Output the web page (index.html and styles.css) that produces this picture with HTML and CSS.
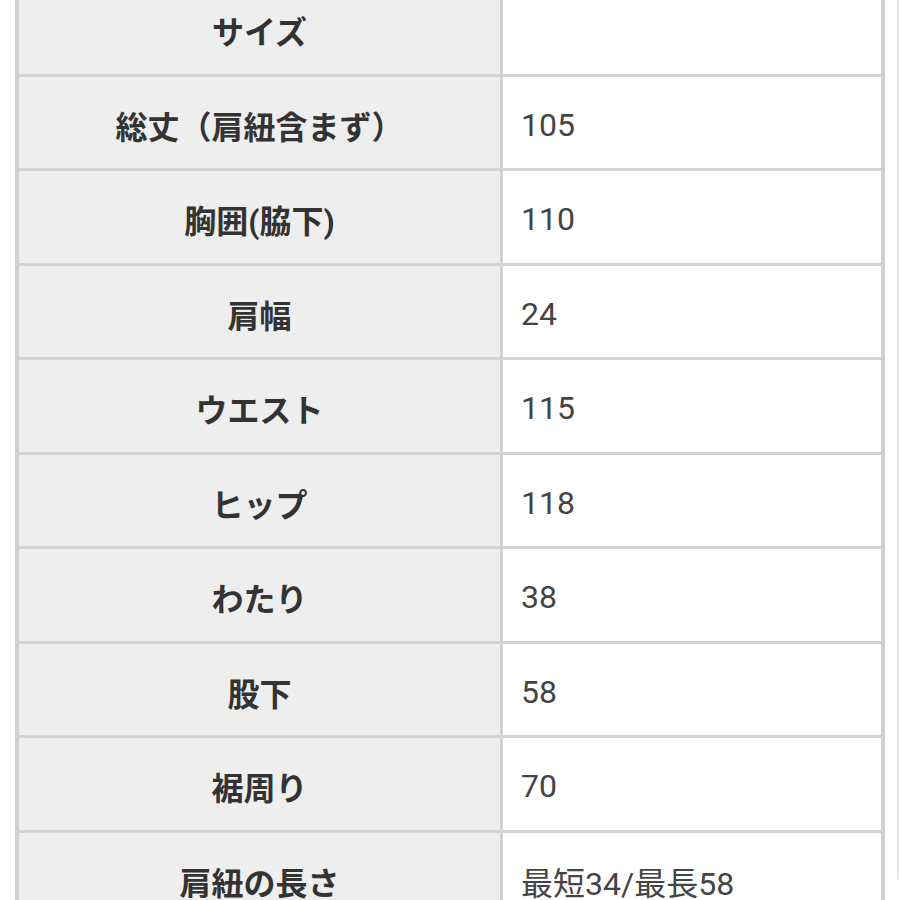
FILE: index.html
```html
<!DOCTYPE html>
<html lang="ja">
<head>
<meta charset="utf-8">
<link rel="stylesheet" href="styles.css">
</head>
<body>
<div class="page">
  <div class="spec">
    <div class="th">サイズ</div><div class="td"></div>
    <div class="th">総丈（肩紐含まず）</div><div class="td">105</div>
    <div class="th">胸囲(脇下)</div><div class="td">110</div>
    <div class="th">肩幅</div><div class="td">24</div>
    <div class="th">ウエスト</div><div class="td">115</div>
    <div class="th">ヒップ</div><div class="td">118</div>
    <div class="th">わたり</div><div class="td">38</div>
    <div class="th">股下</div><div class="td">58</div>
    <div class="th">裾周り</div><div class="td">70</div>
    <div class="th">肩紐の長さ</div><div class="td">最短34/最長58</div>
  </div>
</div>
</body>
</html>
```
FILE: styles.css
```css
html, body {
  margin: 0;
  padding: 0;
  background: #ffffff;
  height: 900px;
  overflow: hidden;
}
.page {
  padding-left: 15px;
  padding-right: 12px;
  width: 870px;
  border-right: 2px solid #e8e8e8;
  height: 900px;
}
.spec {
  margin-top: -21px;
  display: grid;
  grid-template-columns: 481px 378px;
  grid-auto-rows: 91.5px;
  gap: 3px;
  background: #d3d3d3;
  border: 3px solid #d0d0d0;
  border-left-width: 4px;
  font-family: Roboto, "Noto Sans CJK JP", "Noto Sans", sans-serif;
  font-size: 32px;
  color: #333333;
}
.th {
  background: #eeeeee;
  font-weight: bold;
  display: flex;
  align-items: center;
  justify-content: center;
  padding-top: 5px;
  box-sizing: border-box;
}
.td {
  background: #ffffff;
  display: flex;
  align-items: center;
  padding: 5px 0 0 18px;
  box-sizing: border-box;
  color: #444444;
}
```
